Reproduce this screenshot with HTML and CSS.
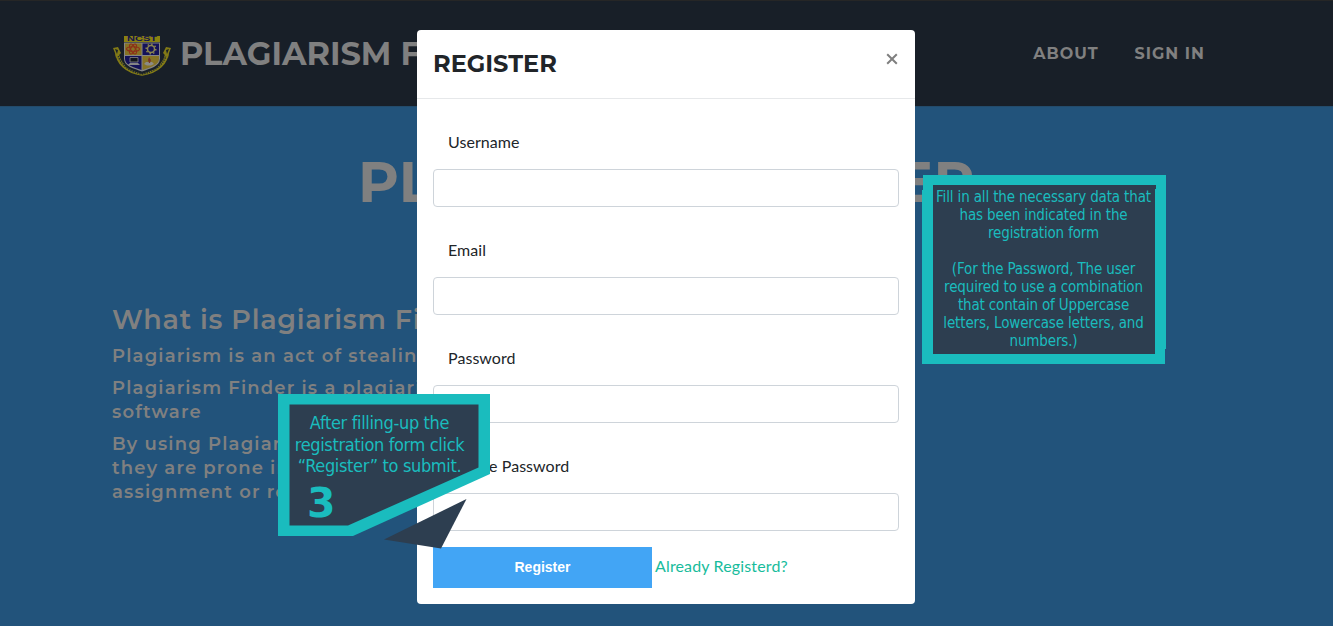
FILE: index.html
```html
<!DOCTYPE html>
<html lang="en">
<head>
<meta charset="utf-8">
<title>Plagiarism Finder</title>
<link rel="stylesheet" href="styles.css">
</head>
<body>
<header class="navbar">
  <div class="brand">
    <svg class="crest" viewBox="0 0 60 42" width="60" height="42">
      <path d="M5 16C5 28 15 37 30 39 45 37 55 28 55 16" fill="none" stroke="#827a16" stroke-width="3.600"/>
      <path d="M6 21C10 31 18 37 30 39 42 37 50 31 54 21" fill="none" stroke="#202a33" stroke-width="1.400" stroke-dasharray="1.4 1"/>
      <path d="M1 13l5-1 3 6-5 5-1-5zM59 13l-5-1-3 6 5 5 1-5z" fill="#827a16"/>
      <path d="M3 14l3 1-1 4zM57 14l-3 1 1 4z" fill="#171f28"/>
      <path d="M11 8h38v17c0 8-10 11-19 14-9-3-19-6-19-14z" fill="#181f28"/>
      <path d="M12 1h36v6H12z" fill="#8a8110"/>
      <text x="30" y="6.400" class="crest-text" textLength="30" lengthAdjust="spacingAndGlyphs">NCST</text>
      <path d="M12 7.500h36v16c0 8-10 10-18 13-8-3-18-5-18-13z" fill="#858585"/>
      <path d="M13 8.500h16.500V20H13zM30.500 21H47v3c0 6-9 8.500-16.500 11z" fill="#867326"/>
      <path d="M30.500 8.500H47V20H30.500zM13 21h16.500v14C22 32.500 13 30 13 24z" fill="#141259"/>
      <g fill="none" stroke="#8d3018" stroke-width="1.1">
        <ellipse cx="21" cy="14" rx="6.500" ry="2.300"/>
        <ellipse cx="21" cy="14" rx="5.500" ry="2.300" transform="rotate(60 21 14)" />
        <ellipse cx="21" cy="14" rx="5.500" ry="2.300" transform="rotate(120 21 14)"/>
      </g>
      <circle cx="39" cy="14" r="3.500" fill="none" stroke="#8a8550" stroke-width="1.500"/>
      <circle cx="39" cy="14" r="4.800" fill="none" stroke="#8a8550" stroke-width="1.500" stroke-dasharray="1.5 2.2"/>
      <path d="M18 22.500h8v4.500h-8z" fill="#11151c" stroke="#858585" stroke-width=".8"/>
      <path d="M16 30l2-2h8l2 2z" fill="#858585"/>
      <path d="M34 27h6l2 2-3 1.500h-4l-3-1.500z" fill="#8b8b86"/>
      <path d="M37 22l2 3-1 3h-1l-1-3z" fill="#7b3525"/>
    </svg>
    <span class="brand-name">PLAGIARISM FINDER</span>
  </div>
  <nav class="links"><a class="about">ABOUT</a><a class="signin">SIGN IN</a></nav>
</header>
<main class="hero">
  <h1 class="hero-title">PLAGIARISM FINDER</h1>
  <section class="intro">
    <h2 class="intro-title">What is Plagiarism Finder?</h2>
    <p>Plagiarism is an act of stealing</p>
    <p>Plagiarism Finder is a plagiarism<br>software</p>
    <p>By using Plagiarism<br>they are prone in<br>assignment or re</p>
  </section>
</main>

<div class="modal">
  <div class="modal-head">
    <h3 class="modal-title">REGISTER</h3>
    <svg class="close" viewBox="0 0 12 12" width="12" height="12"><path d="M1.200 1.200l9.600 9.600M10.800 1.200L1.200 10.800" stroke="#7f7f7f" stroke-width="2"/></svg>
  </div>
  <form class="modal-body">
    <label class="field"><span>Username</span><input class="input" type="text"></label>
    <label class="field"><span>Email</span><input class="input" type="text"></label>
    <label class="field"><span>Password</span><input class="input" type="password"></label>
    <label class="field"><span>Retype Password</span><input class="input" type="password"></label>
    <div class="actions"><button class="submit" type="button">Register</button><a class="already">Already Registerd?</a></div>
  </form>
</div>

<aside class="note">
  <svg class="note-shape" viewBox="0 0 244 189" width="244" height="189">
    <path d="M1 0h243v174h-1v15H0V15h1z" fill="#1abcbe"/>
    <path d="M11 10h223v4h-1v165H11z" fill="#2d3e50"/>
  </svg>
  <p class="note-text">Fill in all the necessary data that<br>has been indicated in the<br>registration form<br><br>(For the Password, The user<br>required to use a combination<br>that contain of Uppercase<br>letters, Lowercase letters, and<br>numbers.)</p>
</aside>

<aside class="step">
  <svg class="step-shape" viewBox="0 0 212 156" width="212" height="156">
    <path d="M0 0h212v80L75 142H0z" fill="#1abcbe"/>
    <path d="M11.500 10.500h189v63L70 131.500H11.500z" fill="#2d3e50"/>
    <path d="M106 145.500L188.500 105 163 154.500z" fill="#2d3e50"/>
  </svg>
  <p class="step-text">After filling-up the<br>registration form click<br>“Register” to submit.</p>
  <strong class="step-number">3</strong>
</aside>
</body>
</html>
```
FILE: styles.css
```css
* { box-sizing: border-box; }
body { margin: 0; width: 1333px; height: 626px; overflow: hidden; position: relative; font-family: Montserrat, Inter, sans-serif; color: #808080; background: #22537b; }
h1, h2, h3, p { margin: 0; }
.navbar { height: 106px; background: #181f28; border-top: 1px solid #262626; display: flex; justify-content: space-between; padding: 0 128px 0 112px; }
.brand { display: flex; padding-top: 34px; gap: 8px; white-space: nowrap; }
.crest-text { font: bold 6.500px "Liberation Sans", sans-serif; fill: #15134d; text-anchor: middle; }
.brand-name { font-size: 32px; line-height: 38px; font-weight: 700; letter-spacing: 0; }
.links { display: flex; gap: 36px; padding-top: 43px; font-size: 16px; line-height: 20px; font-weight: 700; letter-spacing: 1px; }
.hero { display: flex; flex-direction: column; height: 520px; border-top: 1px solid #234b6b; }
.hero-title { align-self: center; margin-top: 42px; font-size: 56px; line-height: 67px; font-weight: 700; letter-spacing: .4px; white-space: nowrap; }
.intro { width: 305px; margin: 87px 0 0 112px; overflow: hidden; white-space: nowrap; font-size: 18px; line-height: 24px; font-weight: 650; letter-spacing: 1.150px; }
.intro-title { font-size: 27px; line-height: 34px; font-weight: 650; letter-spacing: .72px; margin-bottom: 7px; }
.intro p { margin-bottom: 8px; }
.modal { position: absolute; left: 417px; top: 30px; width: 498px; height: 574px; background: #fff; border-radius: 4px; color: #212529; font-family: Lato, sans-serif; }
.modal-head { height: 69px; border-bottom: 1px solid #e6e8ea; display: flex; justify-content: space-between; padding: 16px 17px 0 16px; }
.modal-title { font: 700 24px/35px Montserrat, Inter, sans-serif; }
.close { margin-top: 7px; }
.modal-body { padding: 31px 16px 0; }
.field { display: block; height: 108px; font-size: 16px; line-height: 24px; letter-spacing: .05px; }
.field span { display: block; padding-left: 15px; margin-bottom: 15px; }
.input { display: block; width: 466px; height: 38px; border: 1px solid #ced4da; border-radius: 4px; background: #fff; }
.actions { display: flex; align-items: flex-start; gap: 3px; margin-top: -15px; }
.submit { width: 219px; height: 41px; border: 0; padding: 0 0 1px; background: #42a5f5; color: #fff; font: bold 14px "Liberation Sans", sans-serif; }
.already { padding-top: 7px; font-size: 16px; line-height: 24px; letter-spacing: .15px; color: #18bc9c; }
.note { position: absolute; left: 922px; top: 175px; width: 244px; height: 189px; }
.note-shape, .step-shape { position: absolute; left: 0; top: 0; }
.note-text { position: relative; padding: 13px 1px 0 0; text-align: center; white-space: nowrap; color: #1abcbe; font: 15px/18px Tahoma, "DejaVu Sans Condensed", "DejaVu Sans", sans-serif; font-stretch: condensed; letter-spacing: -.15px; }
.step { position: absolute; left: 278px; top: 394px; width: 212px; height: 156px; color: #1abcbe; }
.step-text { position: relative; padding: 18px 10px 0 0; margin-left: 1px; text-align: center; white-space: nowrap; font: 18px/21.500px Tahoma, "DejaVu Sans Condensed", "DejaVu Sans", sans-serif; font-stretch: condensed; letter-spacing: -.35px; }
.step-number { position: absolute; left: 29px; top: 85px; font: bold 41px/48px Verdana, "DejaVu Sans", sans-serif; }
```
